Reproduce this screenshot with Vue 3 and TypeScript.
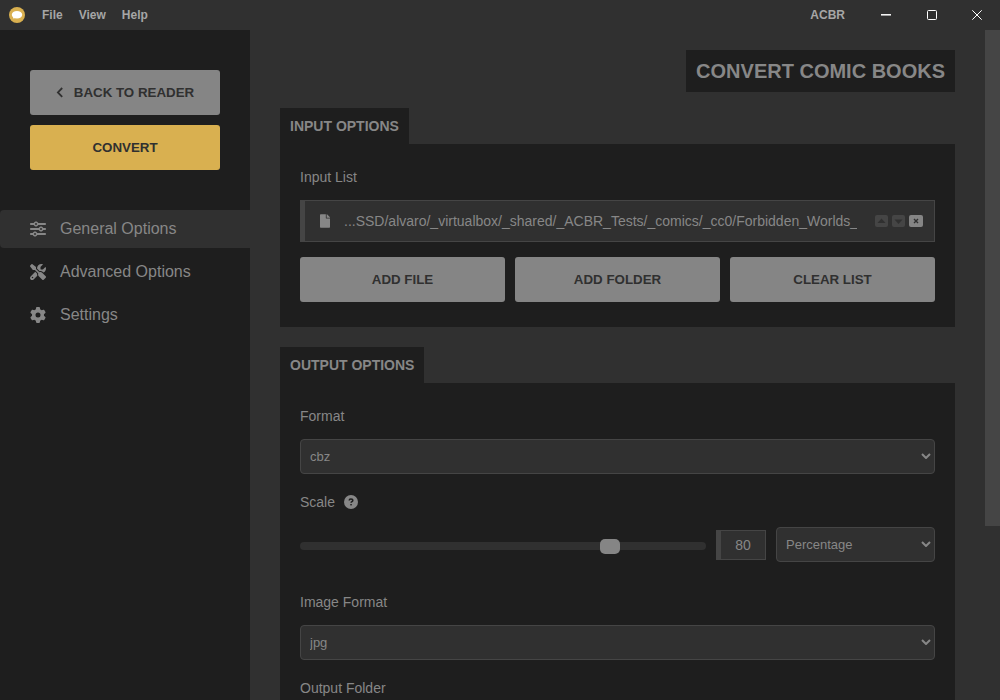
<script setup lang="ts">
import { ref } from 'vue'

interface NavItem {
  label: string
  icon: string
}

const menus: string[] = ['File', 'View', 'Help']

const navItems: NavItem[] = [
  {
    label: 'General Options',
    icon: 'M0 416c0 17.7 14.3 32 32 32l54.7 0c12.3 28.3 40.5 48 73.3 48s61-19.7 73.3-48L480 448c17.7 0 32-14.3 32-32s-14.3-32-32-32l-246.7 0c-12.3-28.3-40.5-48-73.3-48s-61 19.7-73.3 48L32 384c-17.7 0-32 14.3-32 32zm128 0a32 32 0 1 1 64 0 32 32 0 1 1 -64 0zM320 256a32 32 0 1 1 64 0 32 32 0 1 1 -64 0zm32-80c-32.8 0-61 19.7-73.3 48L32 224c-17.7 0-32 14.3-32 32s14.3 32 32 32l246.7 0c12.3 28.3 40.5 48 73.3 48s61-19.7 73.3-48l54.7 0c17.7 0 32-14.3 32-32s-14.3-32-32-32l-54.7 0c-12.3-28.3-40.5-48-73.3-48zM192 128a32 32 0 1 1 0-64 32 32 0 1 1 0 64zm73.3-64C253 35.7 224.8 16 192 16s-61 19.7-73.3 48L32 64C14.3 64 0 78.3 0 96s14.3 32 32 32l86.7 0c12.3 28.3 40.5 48 73.3 48s61-19.7 73.3-48L480 128c17.7 0 32-14.3 32-32s-14.3-32-32-32L265.3 64z',
  },
  {
    label: 'Advanced Options',
    icon: 'M78.6 5C69.1-2.4 55.6-1.5 47 7L7 47c-8.5 8.5-9.4 22-2.1 31.6l80 104c4.5 5.9 11.6 9.4 19 9.4l54.1 0 109 109c-14.7 29-10 65.4 14.3 89.6l112 112c12.5 12.5 32.8 12.5 45.3 0l64-64c12.5-12.5 12.5-32.8 0-45.3l-112-112c-24.2-24.2-60.6-29-89.6-14.3l-109-109 0-54.1c0-7.5-3.5-14.5-9.4-19L78.6 5zM19.9 396.1C7.2 408.8 0 426.1 0 444.1C0 481.6 30.4 512 67.9 512c18 0 35.3-7.2 48-19.9L233.7 374.3c-7.8-20.9-9-43.6-3.6-65.1l-61.7-61.7L19.9 396.1zM512 144c0-10.5-1.1-20.7-3.2-30.5c-2.4-11.2-16.1-14.1-24.2-6l-63.9 63.9c-3 3-7.1 4.7-11.3 4.7L352 176c-8.8 0-16-7.2-16-16l0-57.4c0-4.2 1.7-8.3 4.7-11.3l63.9-63.9c8.1-8.1 5.2-21.8-6-24.2C388.7 1.1 378.5 0 368 0C288.5 0 224 64.5 224 144l0 .8 85.3 85.3c36-9.1 75.8 .5 104 28.7L429 274.5c49-23 83-72.8 83-130.5zM56 432a24 24 0 1 1 48 0 24 24 0 1 1 -48 0z',
  },
  {
    label: 'Settings',
    icon: 'M495.9 166.6c3.2 8.7 .5 18.4-6.4 24.6l-43.3 39.4c1.1 8.3 1.7 16.8 1.7 25.4s-.6 17.1-1.7 25.4l43.3 39.4c6.9 6.2 9.6 15.9 6.4 24.6c-4.4 11.9-9.7 23.3-15.8 34.3l-4.7 8.1c-6.6 11-14 21.4-22.1 31.2c-5.9 7.2-15.7 9.6-24.5 6.8l-55.7-17.7c-13.4 10.3-28.2 18.9-44 25.4l-12.5 57.1c-2 9.1-9 16.3-18.2 17.8c-13.8 2.3-28 3.5-42.5 3.5s-28.7-1.2-42.5-3.5c-9.2-1.5-16.2-8.7-18.2-17.8l-12.5-57.1c-15.8-6.5-30.6-15.1-44-25.4L83.1 425.9c-8.8 2.8-18.6 .3-24.5-6.8c-8.1-9.8-15.5-20.2-22.1-31.2l-4.7-8.1c-6.1-11-11.4-22.4-15.8-34.3c-3.2-8.7-.5-18.4 6.4-24.6l43.3-39.4C64.6 273.1 64 264.6 64 256s.6-17.1 1.7-25.4L22.4 191.2c-6.9-6.2-9.6-15.9-6.4-24.6c4.4-11.9 9.7-23.3 15.8-34.3l4.7-8.1c6.6-11 14-21.4 22.1-31.2c5.9-7.2 15.7-9.6 24.5-6.8l55.7 17.7c13.4-10.3 28.2-18.9 44-25.4l12.5-57.1c2-9.1 9-16.3 18.2-17.8C227.3 1.2 241.5 0 256 0s28.7 1.2 42.5 3.5c9.2 1.5 16.2 8.7 18.2 17.8l12.5 57.1c15.8 6.5 30.6 15.1 44 25.4l55.7-17.7c8.8-2.8 18.6-.3 24.5 6.8c8.1 9.8 15.5 20.2 22.1 31.2l4.7 8.1c6.1 11 11.4 22.4 15.8 34.3zM256 336a80 80 0 1 0 0-160 80 80 0 1 0 0 160z',
  },
]

const activeNav = ref(0)
const files = ref<string[]>(['...SSD/alvaro/_virtualbox/_shared/_ACBR_Tests/_comics/_cc0/Forbidden_Worlds_'])
const format = ref('cbz')
const scale = ref(80)
const scaleMode = ref('Percentage')
const imageFormat = ref('jpg')
</script>

<template>
  <div class="app">
    <header class="titlebar">
      <svg class="logo" viewBox="0 0 16 16" aria-hidden="true">
        <circle cx="8" cy="8" r="8" fill="#d9b050" />
        <ellipse cx="8" cy="7.8" rx="5.2" ry="3.8" fill="#fff" />
        <path d="M4.200 9.500 4.200 11.400l2.500-.5z" fill="#fff" />
      </svg>
      <nav class="menus">
        <button v-for="menu in menus" :key="menu" type="button">{{ menu }}</button>
      </nav>
      <span class="app-name">ACBR</span>
      <div class="window-controls">
        <button type="button" aria-label="Minimize">
          <svg viewBox="0 0 10 10"><path d="M0 4.800h10" stroke-width="1.500" /></svg>
        </button>
        <button type="button" aria-label="Maximize">
          <svg viewBox="0 0 10 10"><rect x=".5" y=".5" width="9" height="9" rx="1" /></svg>
        </button>
        <button type="button" class="close" aria-label="Close">
          <svg viewBox="0 0 10 10"><path d="M.3.3l9.400 9.400M9.700.3L.3 9.700" /></svg>
        </button>
      </div>
    </header>

    <div class="body">
      <aside class="sidebar">
        <div class="actions">
          <button type="button" class="btn">
            <svg class="chevron" viewBox="0 0 8 12" aria-hidden="true"><path d="M6.200 1 1.900 5.400l4.300 4.400" /></svg>
            <span>BACK TO READER</span>
          </button>
          <button type="button" class="btn primary">CONVERT</button>
        </div>
        <nav class="side-nav">
          <button
            v-for="(item, i) in navItems"
            :key="item.label"
            type="button"
            :class="{ active: i === activeNav }"
            @click="activeNav = i"
          >
            <svg viewBox="0 0 512 512" aria-hidden="true"><path :d="item.icon" /></svg>
            <span>{{ item.label }}</span>
          </button>
        </nav>
      </aside>

      <main class="content">
        <h1>CONVERT COMIC BOOKS</h1>

        <section>
          <h2>INPUT OPTIONS</h2>
          <div class="panel">
            <p class="label">Input List</p>
            <ul class="file-list">
              <li v-for="file in files" :key="file">
                <svg class="file-icon" viewBox="0 0 384 512" aria-hidden="true">
                  <path d="M224 136V0H24C10.700 0 0 10.700 0 24v464c0 13.300 10.700 24 24 24h336c13.300 0 24-10.700 24-24V160H248c-13.200 0-24-10.800-24-24zm160-14.100v6.100H256V0h6.100c6.400 0 12.500 2.500 17 7l97.900 98c4.500 4.500 7 10.600 7 16.900z" />
                </svg>
                <span class="file-name">{{ file }}</span>
                <span class="file-tools">
                  <button type="button" disabled aria-label="Move up">
                    <svg viewBox="0 0 13 12"><path d="M2.500 8 6.500 3.500 10.500 8z" /></svg>
                  </button>
                  <button type="button" disabled aria-label="Move down">
                    <svg viewBox="0 0 13 12"><path d="M2.500 4.500h8L6.500 9z" /></svg>
                  </button>
                  <button type="button" class="remove" aria-label="Remove">
                    <svg viewBox="0 0 14 12"><path d="M5 4l4 4M9 4 5 8" /></svg>
                  </button>
                </span>
              </li>
            </ul>
            <div class="button-row">
              <button type="button" class="btn">ADD FILE</button>
              <button type="button" class="btn">ADD FOLDER</button>
              <button type="button" class="btn">CLEAR LIST</button>
            </div>
          </div>
        </section>

        <section>
          <h2>OUTPUT OPTIONS</h2>
          <div class="panel">
            <div class="field">
              <label class="label" for="format">Format</label>
              <div class="select">
                <select id="format" v-model="format">
                  <option>cbz</option>
                  <option>pdf</option>
                  <option>epub</option>
                </select>
                <svg viewBox="0 0 10 6" aria-hidden="true"><path d="M1 1l4 4 4-4" /></svg>
              </div>
            </div>
            <div class="field scale-field">
              <div class="label-row">
                <label class="label" for="scale">Scale</label>
                <svg class="help" viewBox="0 0 14 14" aria-hidden="true">
                  <circle cx="7" cy="7" r="7" />
                  <path d="M5.200 5.400c0-1 .7-1.500 1.700-1.500s1.900.5 1.900 1.500c0 1.200-1.700 1.200-1.700 2.400" />
                  <rect x="6.300" y="9" width="1.500" height="1.400" />
                </svg>
              </div>
              <div class="scale-row">
                <input id="scale" v-model.number="scale" class="slider" type="range" min="0" max="103" />
                <input v-model.number="scale" class="number" type="text" aria-label="Scale value" />
                <div class="select mode">
                  <select v-model="scaleMode" aria-label="Scale mode">
                    <option>Percentage</option>
                    <option>Height</option>
                    <option>Width</option>
                  </select>
                  <svg viewBox="0 0 10 6" aria-hidden="true"><path d="M1 1l4 4 4-4" /></svg>
                </div>
              </div>
            </div>
            <div class="field">
              <label class="label" for="image-format">Image Format</label>
              <div class="select">
                <select id="image-format" v-model="imageFormat">
                  <option>jpg</option>
                  <option>png</option>
                  <option>webp</option>
                </select>
                <svg viewBox="0 0 10 6" aria-hidden="true"><path d="M1 1l4 4 4-4" /></svg>
              </div>
            </div>
            <div class="field">
              <p class="label">Output Folder</p>
            </div>
          </div>
        </section>
      </main>

      <div class="scrollbar" aria-hidden="true"><div class="thumb"></div></div>
    </div>
  </div>
</template>

<style>
body {
  margin: 0;
  background: #303030;
}
</style>

<style scoped>
* {
  box-sizing: border-box;
}

.app {
  display: flex;
  flex-direction: column;
  height: 100vh;
  overflow: hidden;
  background: #303030;
  color: #878787;
  font-family: "Liberation Sans", Arial, sans-serif;
  font-size: 14px;
}

button,
input,
select {
  font-family: inherit;
  color: inherit;
  margin: 0;
}

button {
  border: 0;
  padding: 0;
  background: none;
}

h1,
h2,
p,
ul {
  margin: 0;
  padding: 0;
}

.titlebar {
  display: flex;
  align-items: center;
  flex: none;
  height: 30px;
  padding-left: 9px;
  color: #a6a6a6;
  font-size: 12px;
  font-weight: bold;
}

.logo {
  width: 16px;
  height: 16px;
}

.menus {
  display: flex;
  gap: 16px;
  margin-left: 17px;
}

.menus button {
  font-size: 12px;
  font-weight: bold;
}

.app-name {
  margin-left: auto;
}

.window-controls {
  display: flex;
  margin-left: 18px;
}

.window-controls button {
  display: flex;
  align-items: center;
  justify-content: center;
  width: 46px;
  height: 30px;
}

.window-controls .close {
  justify-content: flex-start;
  width: 45px;
  padding-left: 17px;
}

.window-controls svg {
  width: 10px;
  height: 10px;
  fill: none;
  stroke: #fff;
}

.body {
  display: flex;
  flex: 1;
  min-height: 0;
}

.sidebar {
  flex: none;
  width: 250px;
  padding-top: 40px;
  background: #1e1e1e;
}

.actions {
  display: flex;
  flex-direction: column;
  gap: 10px;
  padding: 0 30px;
}

.btn {
  display: flex;
  align-items: center;
  justify-content: center;
  gap: 10px;
  height: 45px;
  border-radius: 3px;
  background: #858585;
  color: #303030;
  font-weight: bold;
}

.btn.primary {
  background: #d9b050;
}

.chevron {
  width: 8px;
  height: 12px;
  fill: none;
  stroke: #303030;
  stroke-width: 1.8;
}

.side-nav {
  display: flex;
  flex-direction: column;
  gap: 5px;
  margin-top: 40px;
}

.side-nav button {
  display: flex;
  align-items: center;
  gap: 14px;
  height: 38px;
  padding-left: 30px;
  border-radius: 4px 0 0 4px;
  font-size: 16px;
}

.side-nav button.active {
  background: #303030;
}

.side-nav svg {
  width: 16px;
  height: 16px;
  fill: #878787;
}

.content {
  flex: 1;
  min-width: 0;
  overflow: hidden;
  display: flex;
  flex-direction: column;
  padding: 20px 30px 0;
}

h1 {
  align-self: flex-end;
  padding: 9px 10px;
  background: #1e1e1e;
  font-size: 20px;
  line-height: 24px;
}

section {
  margin-top: 16px;
}

section + section {
  margin-top: 20px;
}

h2 {
  width: fit-content;
  padding: 8px 10px;
  background: #1e1e1e;
  font-size: 14px;
  line-height: 20px;
}

.panel {
  padding: 23px 20px 25px;
  background: #1e1e1e;
}

.label {
  display: block;
  line-height: 20px;
}

.file-list {
  margin-top: 13px;
  list-style: none;
}

.file-list li {
  display: flex;
  align-items: center;
  height: 42px;
  padding: 0 11px 0 15px;
  border: 1px solid #454545;
  border-left-width: 5px;
  background: #303030;
}

.file-icon {
  flex: none;
  width: 10px;
  height: 14px;
  fill: #878787;
}

.file-name {
  flex: 1;
  min-width: 0;
  margin: 0 18px 0 14px;
  overflow: hidden;
  white-space: nowrap;
}

.file-tools {
  display: flex;
  gap: 4px;
}

.file-tools button {
  display: flex;
  width: 13px;
  height: 12px;
  border-radius: 2px;
  background: #454545;
}

.file-tools svg {
  width: 100%;
  height: 100%;
  fill: #303030;
}

.file-tools .remove {
  width: 14px;
  background: #858585;
}

.remove svg {
  stroke: #303030;
  stroke-width: 1.4;
}

.button-row {
  display: grid;
  grid-template-columns: repeat(3, 1fr);
  gap: 10px;
  margin-top: 15px;
}

.field + .field {
  margin-top: 18px;
}

.field.scale-field + .field {
  margin-top: 30px;
}

.select {
  position: relative;
  margin-top: 13px;
}

.select select {
  display: block;
  width: 100%;
  height: 35px;
  padding: 0 9px;
  border: 1px solid #454545;
  border-radius: 4px;
  appearance: none;
  background: #303030;
  font-size: 13px;
}

.select svg {
  position: absolute;
  top: 14px;
  right: 4px;
  width: 10px;
  height: 6px;
  fill: none;
  stroke: #878787;
  stroke-width: 2;
  pointer-events: none;
}

.label-row {
  display: flex;
  align-items: center;
  gap: 9px;
}

.help {
  width: 14px;
  height: 14px;
  fill: #878787;
}

.help path {
  fill: none;
  stroke: #1e1e1e;
  stroke-width: 1.5;
}

.help rect {
  fill: #1e1e1e;
}

.scale-row {
  display: flex;
  align-items: center;
  gap: 10px;
  margin-top: 15px;
}

.slider {
  flex: 1;
  min-width: 0;
  height: 15px;
  margin-top: 2px;
  appearance: none;
  background: transparent;
}

.slider::-webkit-slider-runnable-track {
  height: 8px;
  border-radius: 4px;
  background: #303030;
}

.slider::-webkit-slider-thumb {
  width: 20px;
  height: 15px;
  margin-top: -3px;
  border-radius: 5px;
  appearance: none;
  background: #858585;
}

.number {
  width: 50px;
  height: 30px;
  padding: 0;
  border: 1px solid #454545;
  border-left-width: 5px;
  border-radius: 0;
  background: #303030;
  font-size: 14px;
  text-align: center;
}

.mode {
  width: 159px;
  margin-top: 0;
}

.scrollbar {
  flex: none;
  width: 15px;
  background: #303030;
}

.thumb {
  height: 74%;
  background: #454545;
}
</style>
